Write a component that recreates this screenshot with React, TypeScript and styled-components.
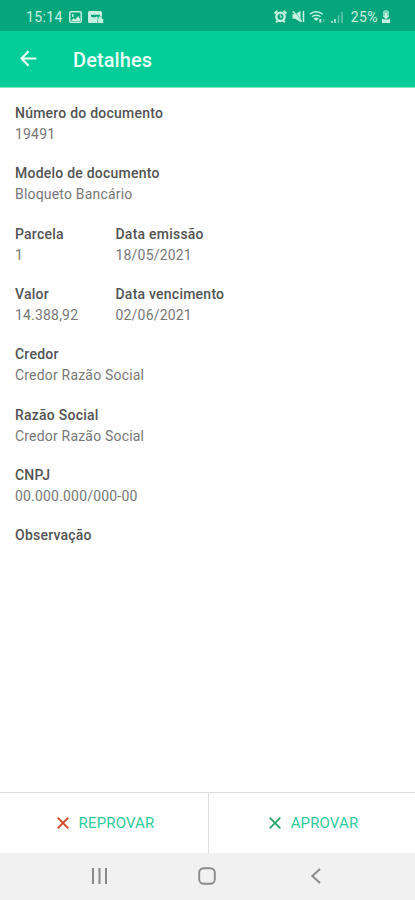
import { FC } from 'react';
import styled, { createGlobalStyle } from 'styled-components';

const GlobalStyle = createGlobalStyle`
  * {
    box-sizing: border-box;
  }

  body {
    margin: 0;
    background-color: #fff;
    font-family: Roboto, 'Liberation Sans', sans-serif;
  }

  svg {
    display: block;
    flex-shrink: 0;
  }
`;

const Screen = styled.div`
  display: flex;
  flex-direction: column;
  width: 100%;
  height: 900px;
  overflow: hidden;
`;

const StatusBar = styled.div`
  display: flex;
  align-items: center;
  justify-content: space-between;
  height: 31px;
  padding: 2px 24px 0 26px;
  background-color: #05a67b;
  color: #c5f0e2;
`;

const StatusGroup = styled.div<{ $gap: number }>`
  display: flex;
  align-items: center;
  gap: ${({ $gap }) => $gap}px;
`;

const StatusText = styled.span`
  font-size: 14px;
  line-height: 16px;
  letter-spacing: 0.4px;
`;

const AppBar = styled.header`
  display: flex;
  align-items: center;
  gap: 35px;
  height: 57px;
  padding: 1px 20px 0;
  border-bottom: 1px solid #7de5c5;
  background-color: #02cd99;
  color: #e9fff8;
`;

const Title = styled.h1`
  margin: 0;
  font-size: 20px;
  font-weight: 500;
  line-height: 24px;
  letter-spacing: 0.1px;
`;

const Details = styled.main`
  display: flex;
  flex: 1;
  flex-direction: column;
  padding: 15px 15px 0;
`;

const Row = styled.div`
  display: flex;
  height: 60.35px;
`;

const Field = styled.div<{ $width?: number }>`
  width: ${({ $width }) => ($width ? `${$width}px` : 'auto')};
`;

const Label = styled.div`
  color: #535353;
  font-size: 14px;
  font-weight: 500;
  line-height: 21px;
  letter-spacing: 0.23px;
`;

const Value = styled.div`
  color: #777;
  font-size: 14px;
  line-height: 20px;
  letter-spacing: 0.19px;
`;

const Actions = styled.div`
  display: flex;
  height: 61px;
  border-top: 1px solid #dcdcdc;
`;

const Action = styled.button<{ $width: number }>`
  display: flex;
  align-items: center;
  justify-content: center;
  gap: 10px;
  width: ${({ $width }) => $width}px;
  padding: 0 0 0 3px;
  border: 0;
  background: none;
  color: #2ccb9c;
  font-family: inherit;
  font-size: 15px;
  line-height: 18px;
  letter-spacing: 0.15px;

  & + & {
    border-left: 1px solid #e0e0e0;
  }
`;

const NavBar = styled.nav`
  display: flex;
  align-items: center;
  justify-content: space-between;
  height: 47px;
  padding: 0 94px 2px 91px;
  background-color: #f1f1f1;
  color: #8a8a8a;
`;

const ImageIcon = () => (
  <svg width="13" height="12" viewBox="0 0 13 12" fill="none" stroke="currentColor" strokeWidth="1.5">
    <rect x=".8" y=".8" width="11.4" height="10.4" rx="1" />
    <path d="M2 10l2.700-3 1.800 1.500L9.200 5 11 8v2z" fill="currentColor" stroke="none" />
    <path d="M3.800 3v3" />
  </svg>
);

const CardIcon = () => (
  <svg width="16" height="12" viewBox="0 0 16 12" fill="currentColor">
    <path d="M1.500 0h11A1.500 1.500 0 0 1 14 1.500v4L12 5V3.800H3v2l3 .6 3-1 1 1.600-1 2v3H1.500A1.500 1.500 0 0 1 0 10.500v-9A1.500 1.500 0 0 1 1.500 0z" />
    <path d="M9.500 8h1V7a1.700 1.700 0 0 1 3.400 0v1h1.300v4H9.500z" />
  </svg>
);

const AlarmIcon = () => (
  <svg width="13" height="13" viewBox="0 0 13 13" fill="none" stroke="currentColor">
    <circle cx="6.500" cy="6.800" r="4.200" strokeWidth="2.300" />
    <path d="M.6 3.400L3.500.9M12.400 3.400L9.500.9M2.200 12.300l1.600-1.800M10.800 12.300l-1.600-1.800" strokeWidth="2" />
    <path d="M6.300 4.500v2.600h2" strokeWidth="1" />
  </svg>
);

const MuteIcon = () => (
  <svg width="13" height="13" viewBox="0 0 13 13">
    <path d="M.5 4.300H3L8.500 1v11L3 8.700H.500z" fill="currentColor" />
    <path d="M1.800.5l8 11" stroke="#05a67b" strokeWidth="1" />
    <path d="M.8 1.200l9 10.600" stroke="currentColor" strokeWidth="1.500" />
    <path d="M11.500 1v11" stroke="currentColor" strokeWidth="1.500" />
  </svg>
);

const WifiIcon = () => (
  <svg width="17" height="13" viewBox="0 0 17 13" fill="none" stroke="currentColor">
    <path d="M.8 4.300a9.500 9.500 0 0 1 12.800 0M3 6.800a6.300 6.300 0 0 1 8.500 0" strokeWidth="1.500" />
    <path d="M4.500 8.400q2.700-2 5.400 0l-2.700 2.500z" fill="currentColor" stroke="none" />
    <path d="M11.300 9v3.500" strokeWidth="2" />
    <path d="M14.800 9v3" strokeWidth="1.200" opacity=".5" />
  </svg>
);

const SignalIcon = () => (
  <svg width="12" height="12" viewBox="0 0 12 12" stroke="currentColor" strokeWidth="1.500">
    <path d="M1 10v2M4 8v4" />
    <path d="M7.500 4.500V12M11 1v11" opacity=".5" />
  </svg>
);

const BatteryIcon = () => (
  <svg width="10" height="13" viewBox="0 0 10 13" fill="currentColor">
    <path d="M3.500 0h3v1H8v6H2V1h1.500z" opacity=".65" />
    <path d="M4 3h2v3h2L5 9.500 2 6h2z" />
    <path d="M1 8.500l2 1h4l2-1V13H1z" />
  </svg>
);

const BackIcon = () => (
  <svg width="18" height="20" viewBox="0 0 18 20" fill="none" stroke="currentColor" strokeWidth="2.200">
    <path d="M16.300 8.500H2M8.500 1.300L1.600 8.500l6.900 7.200" />
  </svg>
);

const CrossIcon: FC<{ color: string }> = ({ color }) => (
  <svg width="12" height="12" viewBox="0 0 12 12" stroke={color} strokeWidth="1.800">
    <path d="M.7.700l10.600 10.600M11.300.700L.700 11.300" />
  </svg>
);

const RecentsIcon = () => (
  <svg width="17" height="16" viewBox="0 0 17 16" stroke="currentColor" strokeWidth="2">
    <path d="M2 0v16M8.500 0v16M15 0v16" />
  </svg>
);

const HomeIcon = () => (
  <svg width="18" height="18" viewBox="0 0 18 18" fill="none" stroke="currentColor" strokeWidth="1.900">
    <rect x="1.200" y="1.200" width="15.600" height="15.600" rx="4.500" />
  </svg>
);

const NavBackIcon = () => (
  <svg width="16" height="16" viewBox="0 0 16 16" fill="none" stroke="currentColor" strokeWidth="2">
    <path d="M15 1L7.300 8l7.700 7" />
  </svg>
);

interface DetailProps {
  label: string;
  value?: string;
  width?: number;
}

const Detail: FC<DetailProps> = ({ label, value, width }) => (
  <Field $width={width}>
    <Label>{label}</Label>
    {value && <Value>{value}</Value>}
  </Field>
);

const rows: DetailProps[][] = [
  [{ label: 'Número do documento', value: '19491' }],
  [{ label: 'Modelo de documento', value: 'Bloqueto Bancário' }],
  [
    { label: 'Parcela', value: '1', width: 100.5 },
    { label: 'Data emissão', value: '18/05/2021' },
  ],
  [
    { label: 'Valor', value: '14.388,92', width: 100.5 },
    { label: 'Data vencimento', value: '02/06/2021' },
  ],
  [{ label: 'Credor', value: 'Credor Razão Social' }],
  [{ label: 'Razão Social', value: 'Credor Razão Social' }],
  [{ label: 'CNPJ', value: '00.000.000/000-00' }],
  [{ label: 'Observação' }],
];

const App: FC = () => (
  <>
    <GlobalStyle />
    <Screen>
      <StatusBar>
        <StatusGroup $gap={6}>
          <StatusText>15:14</StatusText>
          <ImageIcon />
          <CardIcon />
        </StatusGroup>
        <StatusGroup $gap={8}>
          <StatusGroup $gap={4.5}>
            <AlarmIcon />
            <MuteIcon />
            <WifiIcon />
            <SignalIcon />
          </StatusGroup>
          <StatusGroup $gap={3}>
            <StatusText>25%</StatusText>
            <BatteryIcon />
          </StatusGroup>
        </StatusGroup>
      </StatusBar>
      <AppBar>
        <BackIcon />
        <Title>Detalhes</Title>
      </AppBar>
      <Details>
        {rows.map((fields) => (
          <Row key={fields[0].label}>
            {fields.map((field) => (
              <Detail key={field.label} {...field} />
            ))}
          </Row>
        ))}
      </Details>
      <Actions>
        <Action $width={208}>
          <CrossIcon color="#d2431f" />
          REPROVAR
        </Action>
        <Action $width={207}>
          <CrossIcon color="#25a567" />
          APROVAR
        </Action>
      </Actions>
      <NavBar>
        <RecentsIcon />
        <HomeIcon />
        <NavBackIcon />
      </NavBar>
    </Screen>
  </>
);

export default App;
